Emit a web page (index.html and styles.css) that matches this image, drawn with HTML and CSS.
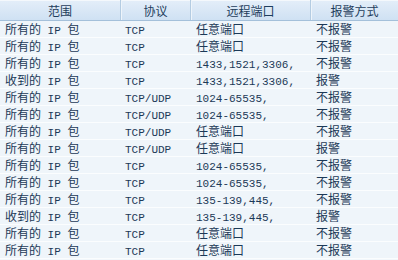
FILE: index.html
```html
<!DOCTYPE html>
<html lang="zh">
<head>
<meta charset="utf-8">
<link rel="stylesheet" href="styles.css">
</head>
<body>
<div class="grid">
  <div class="row head">
    <div class="c">范围</div>
    <div class="c">协议</div>
    <div class="c">远程端口</div>
    <div class="c">报警方式</div>
  </div>
  <div class="row"><div class="c">所有的<span class="en"> IP </span>包</div><div class="c c2"><span class="en">TCP</span></div><div class="c">任意端口</div><div class="c">不报警</div></div>
  <div class="row"><div class="c">所有的<span class="en"> IP </span>包</div><div class="c c2"><span class="en">TCP</span></div><div class="c">任意端口</div><div class="c">不报警</div></div>
  <div class="row"><div class="c">所有的<span class="en"> IP </span>包</div><div class="c c2"><span class="en">TCP</span></div><div class="c"><span class="en">1433,1521,3306,</span></div><div class="c">不报警</div></div>
  <div class="row"><div class="c">收到的<span class="en"> IP </span>包</div><div class="c c2"><span class="en">TCP</span></div><div class="c"><span class="en">1433,1521,3306,</span></div><div class="c">报警</div></div>
  <div class="row"><div class="c">所有的<span class="en"> IP </span>包</div><div class="c c2"><span class="en">TCP/UDP</span></div><div class="c"><span class="en">1024-65535,</span></div><div class="c">不报警</div></div>
  <div class="row"><div class="c">所有的<span class="en"> IP </span>包</div><div class="c c2"><span class="en">TCP/UDP</span></div><div class="c"><span class="en">1024-65535,</span></div><div class="c">不报警</div></div>
  <div class="row"><div class="c">所有的<span class="en"> IP </span>包</div><div class="c c2"><span class="en">TCP/UDP</span></div><div class="c">任意端口</div><div class="c">不报警</div></div>
  <div class="row"><div class="c">所有的<span class="en"> IP </span>包</div><div class="c c2"><span class="en">TCP/UDP</span></div><div class="c">任意端口</div><div class="c">报警</div></div>
  <div class="row"><div class="c">所有的<span class="en"> IP </span>包</div><div class="c c2"><span class="en">TCP</span></div><div class="c"><span class="en">1024-65535,</span></div><div class="c">不报警</div></div>
  <div class="row"><div class="c">所有的<span class="en"> IP </span>包</div><div class="c c2"><span class="en">TCP</span></div><div class="c"><span class="en">1024-65535,</span></div><div class="c">不报警</div></div>
  <div class="row"><div class="c">所有的<span class="en"> IP </span>包</div><div class="c c2"><span class="en">TCP</span></div><div class="c"><span class="en">135-139,445,</span></div><div class="c">不报警</div></div>
  <div class="row"><div class="c">收到的<span class="en"> IP </span>包</div><div class="c c2"><span class="en">TCP</span></div><div class="c"><span class="en">135-139,445,</span></div><div class="c">报警</div></div>
  <div class="row"><div class="c">所有的<span class="en"> IP </span>包</div><div class="c c2"><span class="en">TCP</span></div><div class="c">任意端口</div><div class="c">不报警</div></div>
  <div class="row"><div class="c">所有的<span class="en"> IP </span>包</div><div class="c c2"><span class="en">TCP</span></div><div class="c">任意端口</div><div class="c">不报警</div></div>
</div>
</body>
</html>
```

FILE: styles.css
```css
html, body {
  margin: 0;
  padding: 0;
  background: #f2f7fb;
}
.grid {
  width: 398px;
  font-family: "Noto Sans CJK SC", sans-serif;
  font-size: 12px;
  color: #1c3957;
}
.row {
  display: grid;
  grid-template-columns: 121px 70px 120px 87px;
  height: 16px;
  border-bottom: 1px solid #fbfdfe;
  background: #eff5fa;
}
.row .c {
  padding-left: 5px;
  line-height: 16px;
  white-space: nowrap;
  overflow: hidden;
}
.row .c2 {
  padding-left: 4px;
}
.row.head {
  height: 20px;
  border-bottom: 1px solid #a4c0da;
  background: linear-gradient(#e4eef9, #cfe1f3);
  box-shadow: inset 0 1px 0 #f4f8fc;
}
.row.head .c {
  padding-left: 0;
  text-align: center;
  line-height: 21px;
  color: #1e3d5c;
  border-right: 1px solid #b4cce2;
  box-shadow: inset 1px 0 0 #eef4fa;
}
.row.head .c:first-child {
  box-shadow: none;
}
.row.head .c:last-child {
  border-right: 0;
}
.en {
  font-family: "Liberation Mono", monospace;
  font-size: 11px;
  font-weight: normal;
}
```
